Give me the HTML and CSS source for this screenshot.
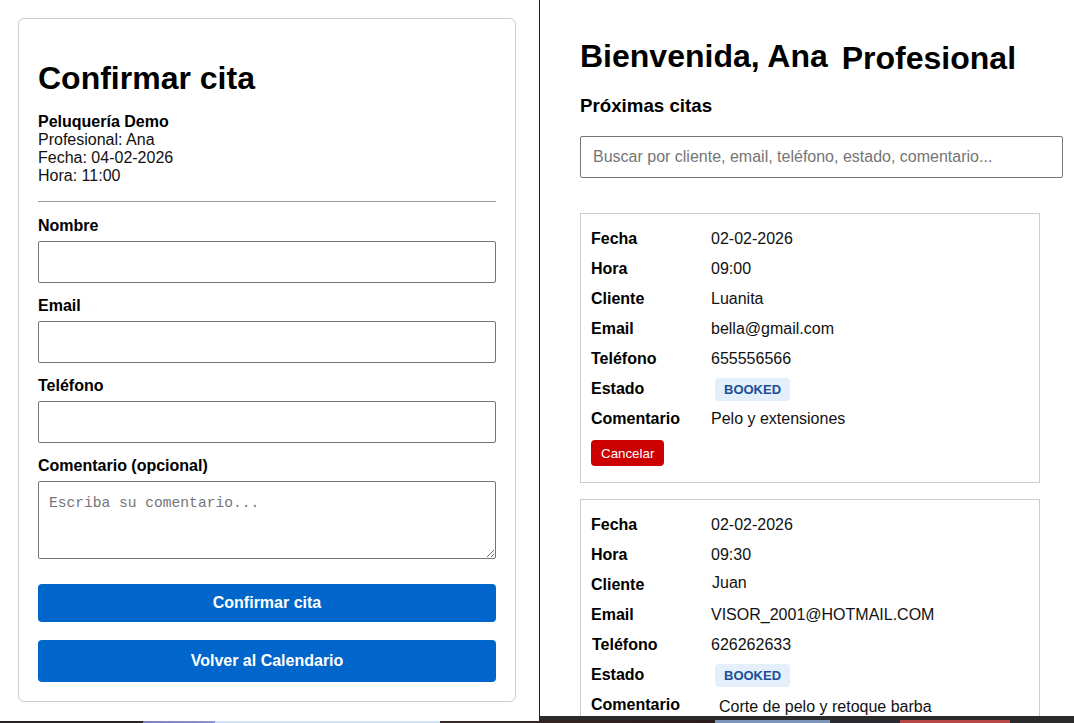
FILE: index.html
```html
<!DOCTYPE html>
<html lang="es">
<head>
<meta charset="utf-8">
<title>Confirmar cita</title>
<link rel="stylesheet" href="styles.css">
</head>
<body>
<div class="screen">
  <div class="pane pane-left">
    <div class="card">
      <h1 class="title">Confirmar cita</h1>
      <div class="info">
        <strong>Peluquería Demo</strong><br>
        Profesional: Ana<br>
        Fecha: 04-02-2026<br>
        Hora: 11:00
      </div>
      <hr class="sep">
      <form class="form">
        <label class="field-label">Nombre</label>
        <input class="field" type="text">
        <label class="field-label">Email</label>
        <input class="field" type="email">
        <label class="field-label">Teléfono</label>
        <input class="field" type="tel">
        <label class="field-label">Comentario (opcional)</label>
        <textarea class="area" placeholder="Escriba su comentario..."></textarea>
        <button type="button" class="btn btn-confirm">Confirmar cita</button>
        <button type="button" class="btn btn-back">Volver al Calendario</button>
      </form>
    </div>
  </div>
  <div class="pane pane-right">
    <div class="header">
      <h1 class="welcome">Bienvenida, Ana</h1>
      <span class="role">Profesional</span>
    </div>
    <h3 class="subtitle">Próximas citas</h3>
    <input class="search" type="text" placeholder="Buscar por cliente, email, teléfono, estado, comentario...">
    <div class="appt">
      <div class="grid">
        <span class="k">Fecha</span><span class="v">02-02-2026</span>
        <span class="k">Hora</span><span class="v">09:00</span>
        <span class="k">Cliente</span><span class="v">Luanita</span>
        <span class="k">Email</span><span class="v">bella@gmail.com</span>
        <span class="k">Teléfono</span><span class="v">655556566</span>
        <span class="k">Estado</span><span class="v"><span class="badge">BOOKED</span></span>
        <span class="k">Comentario</span><span class="v">Pelo y extensiones</span>
      </div>
      <button type="button" class="cancel">Cancelar</button>
    </div>
    <div class="appt">
      <div class="grid">
        <span class="k">Fecha</span><span class="v">02-02-2026</span>
        <span class="k">Hora</span><span class="v">09:30</span>
        <span class="k">Cliente</span><span class="v v-up">Juan</span>
        <span class="k">Email</span><span class="v">VISOR_2001@HOTMAIL.COM</span>
        <span class="k k-shift">Teléfono</span><span class="v">626262633</span>
        <span class="k">Estado</span><span class="v"><span class="badge">BOOKED</span></span>
        <span class="k">Comentario</span><span class="v v-indent">Corte de pelo y retoque barba</span>
      </div>
      <button type="button" class="cancel">Cancelar</button>
    </div>
  </div>
</div>
</body>
</html>
```
FILE: styles.css
```css
* { box-sizing: border-box; }

html, body {
  margin: 0;
  height: 723px;
  overflow: hidden;
}

body {
  font-family: "Liberation Sans", Arial, sans-serif;
  font-size: 16px;
  color: #111;
  background: linear-gradient(to right,
    #2b2424 0, #2b2424 143px,
    #7a7fc8 143px, #8c95d4 215px,
    #cfe3f5 215px, #cfe3f5 440px,
    #3a2a2a 440px, #2a1c1c 715px,
    #7d95b8 715px, #7d95b8 830px,
    #2a2a30 830px, #2a2a30 900px,
    #b84848 900px, #b84848 1010px,
    #2a2a2a 1010px);
}

.screen {
  display: flex;
  align-items: flex-start;
  height: 721px;
}

.pane-left {
  width: 539px;
  height: 721px;
  background: #fff;
  padding: 18px 0 0 18px;
}

.card {
  width: 498px;
  border: 1px solid #ccc;
  border-radius: 6px;
  padding: 20px 19px 19px;
  background: #fff;
}

.title {
  font-size: 32px;
  line-height: 37px;
  font-weight: bold;
  margin: 21px 0 16px;
  color: #000;
}

.info {
  line-height: 18px;
}

.info strong { color: #000; }

.sep {
  border: 0;
  border-top: 1px solid #999;
  margin: 16px 0 15px;
  height: 0;
}

.form {
  display: flex;
  flex-direction: column;
}

.field-label {
  display: block;
  font-weight: bold;
  line-height: 18px;
  margin-bottom: 6px;
  color: #000;
}

.field {
  display: block;
  width: 100%;
  height: 42px;
  border: 1px solid #767676;
  border-radius: 2px;
  padding: 0 10px;
  font: 16px "Liberation Sans", Arial, sans-serif;
  margin: 0 0 14px;
}

.area {
  display: block;
  width: 100%;
  height: 78px;
  border: 1px solid #767676;
  border-radius: 2px;
  padding: 13px 10px 10px;
  font: 14.6px "Liberation Mono", "DejaVu Sans Mono", monospace;
  margin: 0 0 25px;
  resize: vertical;
}

.area::placeholder { color: #757575; }

.btn {
  display: block;
  width: 100%;
  border: 0;
  border-radius: 4px;
  background: #0066cc;
  color: #fff;
  font: bold 16px "Liberation Sans", Arial, sans-serif;
  padding: 0;
}

.btn-confirm {
  height: 38px;
  margin-bottom: 18px;
}

.btn-back {
  height: 42px;
}

.pane-right {
  flex: 1;
  height: 720px;
  background: #fff;
  border-left: 1px solid #1f1f1f;
  border-bottom: 4px solid #2b2b2b;
  padding: 38px 0 0 40px;
  overflow: hidden;
}

.header {
  display: flex;
  align-items: flex-start;
  gap: 14px;
}

.welcome {
  margin: 0;
  font-size: 32px;
  line-height: 37px;
  font-weight: bold;
  color: #000;
}

.role {
  font-size: 32px;
  line-height: 37px;
  font-weight: bold;
  color: #000;
  margin-top: 2px;
}

.subtitle {
  margin: 18px 0 19px;
  font-size: 18.72px;
  line-height: 22px;
  font-weight: bold;
  color: #000;
}

.search {
  display: block;
  width: 483px;
  height: 42px;
  border: 1px solid #767676;
  border-radius: 2px;
  padding: 0 12px;
  font: 16px "Liberation Sans", Arial, sans-serif;
  margin: 0 0 35px;
}

.search::placeholder { color: #757575; }

.appt {
  width: 460px;
  border: 1px solid #ccc;
  padding: 10px 10px 16px;
  margin-bottom: 16px;
}

.grid {
  display: grid;
  grid-template-columns: 120px 1fr;
  grid-auto-rows: 30px;
  align-items: center;
}

.k {
  font-weight: bold;
  color: #000;
}

.v { color: #111; }

.v-up { padding-bottom: 4px; padding-left: 1px; }
.v-indent { padding-top: 4px; padding-left: 8px; }
.k-shift { padding-left: 1px; }

.badge {
  display: inline-block;
  margin-left: 4px;
  padding: 4px 9px;
  border-radius: 4px;
  background: #e3f0fc;
  color: #1b4f96;
  font-size: 13px;
  line-height: 15px;
  font-weight: bold;
}

.cancel {
  display: block;
  margin-top: 6px;
  height: 26px;
  padding: 0 10px;
  border: 0;
  border-radius: 4px;
  background: #cc0000;
  color: #fff;
  font: 13.33px "Liberation Sans", Arial, sans-serif;
}
```
